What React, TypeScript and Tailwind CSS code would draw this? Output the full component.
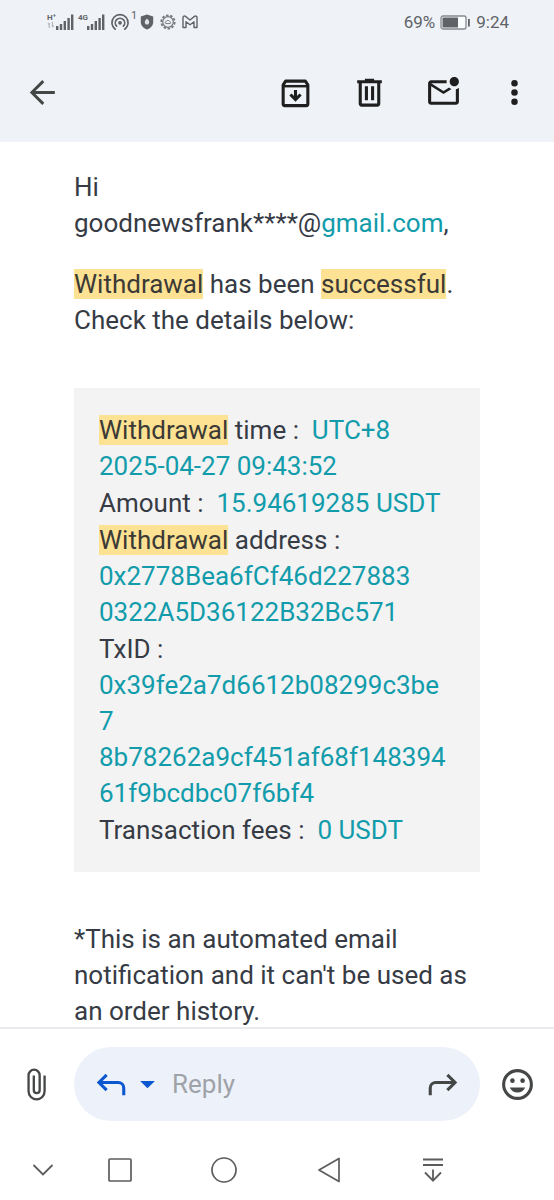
import type { ReactNode } from 'react';

function SignalBars() {
  return (
    <svg width="18" height="16" viewBox="0 0 18 16" fill="#5f6367" aria-hidden="true">
      <rect x="0" y="12" width="2.4" height="4" />
      <rect x="3.8" y="10" width="2.4" height="6" />
      <rect x="7.6" y="7" width="2.4" height="9" />
      <rect x="11.4" y="4" width="2.4" height="12" />
      <rect x="15" y="0.5" width="2.4" height="15.5" />
    </svg>
  );
}

function StatusBar() {
  return (
    <div className="flex h-11 items-center justify-between pl-[47px] pr-[45px] text-[#5f6367]">
      <div className="flex items-center">
        <div className="flex h-4 w-[9px] flex-col">
          <span className="text-[8px] font-bold leading-[8px]">H⁺</span>
          <svg width="8" height="6" viewBox="0 0 8 6" fill="none" stroke="#b4b7ba" strokeWidth="1.2" aria-hidden="true">
            <path d="M2.2 6V1M.8 2.4 2.2 1M5.4 0v5M6.8 3.8 5.4 5" />
          </svg>
        </div>
        <SignalBars />
        <span className="ml-1 h-4 w-[9px] text-[8px] font-bold leading-[8px]">4G</span>
        <SignalBars />
        <svg className="ml-[5px]" width="20" height="18" viewBox="0 0 20 18" fill="none" stroke="#5f6367" strokeWidth="1.7" strokeLinecap="round" aria-hidden="true">
          <path d="M5.2 16.2a8.1 8.1 0 1 1 9.6 0" />
          <path d="M6.6 13.2a4.7 4.7 0 1 1 6.8 0" />
          <circle cx="10" cy="9.8" r="1.9" fill="#5f6367" stroke="none" />
        </svg>
        <span className="h-6 w-[10px] pl-px text-[11px] leading-[12px]">1</span>
        <svg width="14" height="16" viewBox="0 0 14 16" aria-hidden="true">
          <path d="M7 .6 13.2 2.6V8c0 3.6-2.4 6-6.2 7.5C3.2 14 .8 11.6.8 8V2.6Z" fill="#5f6367" />
          <path d="M7 4.6c1.7 1.7 2.2 2.7 2.2 3.8a2.2 2.2 0 0 1-4.4 0C4.8 7.3 5.300 6.300 7 4.600Z" fill="#dfe2e6" />
        </svg>
        <svg className="ml-[6px]" width="16" height="16" viewBox="0 0 16 16" fill="none" stroke="#74787c" strokeWidth="1.2" aria-hidden="true">
          <circle cx="8" cy="8" r="5.3" />
          <circle cx="8" cy="8" r="6.7" strokeWidth="1.8" strokeDasharray="2.5 1.7" />
          <path d="M5.8 9.6h4.4a1.400 1.400 0 0 0-.7-2.300 1.800 1.800 0 0 0-3.200.2 1.100 1.100 0 0 0-.5 2.100Z" strokeWidth="1" />
        </svg>
        <svg className="ml-[6px]" width="16" height="14" viewBox="0 0 16 14" fill="none" stroke="#5f6367" strokeWidth="1.4" strokeLinejoin="round" aria-hidden="true">
          <path d="M1 2.3V12.5H4V6.8L8 9.8L12 6.8V12.5H15V2.3C15 1 13.5.6 12.5 1.4L8 5L3.5 1.4C2.5.6 1 1 1 2.3Z" />
        </svg>
      </div>
      <div className="flex items-center text-[17px] leading-6">
        <span>69%</span>
        <svg className="ml-[5px]" width="31" height="15" viewBox="0 0 31 15" aria-hidden="true">
          <rect x="1" y="1" width="25" height="13" rx="2" fill="#fafbfc" stroke="#85898d" strokeWidth="1.3" />
          <rect x="2.5" y="2.5" width="15.5" height="10" fill="#5f6367" />
          <rect x="28" y="4" width="1.8" height="7.5" fill="#5f6367" />
        </svg>
        <span className="ml-[5px]">9:24</span>
      </div>
    </div>
  );
}

function IconButton({ label, className, children }: { label: string; className: string; children: ReactNode }) {
  return (
    <button type="button" aria-label={label} className={`flex items-center justify-center ${className}`}>
      {children}
    </button>
  );
}

function Toolbar() {
  return (
    <div className="flex h-[98px] items-center pb-[2px] pl-[5px] pr-[6px]">
      <IconButton label="Back" className="h-[74px] w-[74px]">
        <svg width="37" height="37" viewBox="0 0 24 24" fill="none" stroke="#444746" strokeWidth="1.9">
          <path d="M20 12H5M12.5 4.6 5.1 12l7.400 7.400" />
        </svg>
      </IconButton>
      <div className="flex-1" />
      <IconButton label="Archive" className="h-[74px] w-[74px]">
        <svg width="37" height="37" viewBox="0 0 24 24" fill="none" stroke="#1f1f1f" strokeWidth="2">
          <path d="M4 7 5.6 4.6H18.4L20 7V19.5a1 1 0 0 1-1 1H5a1 1 0 0 1-1-1Z" strokeLinejoin="round" />
          <path d="M4 7.9H20" strokeWidth="1.6" />
          <path d="M12 10.3V16.3M8.7 13.3 12 16.6l3.3-3.3" />
        </svg>
      </IconButton>
      <IconButton label="Delete" className="h-[74px] w-[74px]">
        <svg width="37" height="37" viewBox="0 0 24 24" fill="none" stroke="#1f1f1f" strokeWidth="2">
          <path d="M4 5H20M9 4h6" />
          <path d="M6 5V19.2a1 1 0 0 0 1 1H17a1 1 0 0 0 1-1V5" />
          <path d="M10 8v9M14 8v9" />
        </svg>
      </IconButton>
      <IconButton label="Mark as unread" className="h-[74px] w-[74px]">
        <svg width="37" height="37" viewBox="0 0 24 24" fill="#1f1f1f">
          <path d="M22 8.98V18c0 1.1-.9 2-2 2H4c-1.1 0-2-.9-2-2V6c0-1.1.9-2 2-2h10.1c-.06.32-.1.66-.1 1s.04.68.1 1H4l8 5 3.67-2.29c.47.43 1.02.76 1.63.98L12 13 4 8v10h16V9.9c.74-.15 1.42-.48 2-.92zM16 5c0 1.66 1.34 3 3 3s3-1.34 3-3-1.34-3-3-3-3 1.34-3 3z" />
        </svg>
      </IconButton>
      <IconButton label="More options" className="h-[74px] w-[68px]">
        <svg width="37" height="37" viewBox="0 0 24 24" fill="#1f1f1f">
          <circle cx="12" cy="6" r="2.1" />
          <circle cx="12" cy="12" r="2.1" />
          <circle cx="12" cy="18" r="2.1" />
        </svg>
      </IconButton>
    </div>
  );
}

function Mark({ children }: { children: ReactNode }) {
  return <mark className="bg-[#fde293] text-[#3c3a36]">{children}</mark>;
}

function Detail({ label, value }: { label: ReactNode; value: string }) {
  return (
    <p>
      {label}
      {'\u00a0:\u00a0 '}
      <span className="text-[#129cab]">{value}</span>
    </p>
  );
}

function Message() {
  return (
    <main className="min-h-0 flex-1 overflow-y-auto px-[74px] pt-[27px] text-[26px] leading-9 text-[#363b45] [scrollbar-width:none]">
      <p>
        Hi
        <br />
        goodnewsfrank****@
        <a href="http://gmail.com" className="text-[#129cab]">gmail.com</a>,
      </p>
      <p className="mt-[25px]">
        <Mark>Withdrawal</Mark> has been <Mark>successful</Mark>.
        <br />
        Check the details below:
      </p>
      <section className="mt-[50px] flex flex-col gap-px break-words bg-[#f3f3f3] py-6 pl-[25px] pr-7">
        <Detail label={<><Mark>Withdrawal</Mark> time</>} value="UTC+8 2025-04-27 09:43:52" />
        <Detail label="Amount" value="15.94619285 USDT" />
        <Detail label={<><Mark>Withdrawal</Mark> address</>} value="0x2778Bea6fCf46d227883 0322A5D36122B32Bc571" />
        <Detail label="TxID" value="0x39fe2a7d6612b08299c3be7 8b78262a9cf451af68f14839461f9bcdbc07f6bf4" />
        <Detail label="Transaction fees" value="0 USDT" />
      </section>
      <p className="mt-[49px]">*This is an automated email notification and it can't be used as an order history.</p>
    </main>
  );
}

function ReplyBar() {
  return (
    <div className="flex items-center border-t-2 border-[#e9ebee] py-[18px]">
      <IconButton label="Attach file" className="h-[74px] w-[74px]">
        <svg width="37" height="37" viewBox="0 0 24 24" fill="none" stroke="#444746" strokeWidth="1.5">
          <path d="M16.6 6.2V16.4a5.2 5.200 0 0 1-10.400 0V6a3.600 3.600 0 0 1 7.200 0V15.700a1.900 1.900 0 0 1-3.800 0V6.200" />
        </svg>
      </IconButton>
      <div className="flex h-[74px] min-w-0 flex-1 items-center rounded-full bg-[#edf2fa] px-[18px]">
        <IconButton label="Reply" className="h-11 w-[37px]">
          <svg width="37" height="37" viewBox="0 0 24 24" fill="none" stroke="#0b57d0" strokeWidth="2">
            <path d="M9.5 5.7 4.5 10.7l5 5M4.5 10.7H17a3.600 3.600 0 0 1 3.600 3.600V19" />
          </svg>
        </IconButton>
        <IconButton label="Choose reply type" className="h-11 w-[37px]">
          <svg width="37" height="37" viewBox="0 0 24 24" fill="#0b57d0">
            <path d="M7.2 9.700H16.800L12 14.500Z" />
          </svg>
        </IconButton>
        <input
          type="text"
          aria-label="Reply message"
          placeholder="Reply"
          className="ml-[6px] min-w-0 flex-1 bg-transparent text-[26px] leading-9 outline-none placeholder:text-[#9fa3a8]"
        />
        <IconButton label="Forward" className="h-11 w-[37px]">
          <svg width="37" height="37" viewBox="0 0 24 24" fill="none" stroke="#444746" strokeWidth="2">
            <path d="m14.500 5.700 5 5-5 5M19.500 10.700H7a3.600 3.600 0 0 0-3.600 3.600V19" />
          </svg>
        </IconButton>
      </div>
      <IconButton label="Insert emoji" className="h-[74px] w-[74px]">
        <svg width="37" height="37" viewBox="0 0 24 24" fill="#444746">
          <circle cx="12" cy="12" r="9" fill="none" stroke="#444746" strokeWidth="2" />
          <circle cx="8.7" cy="9.5" r="1.5" />
          <circle cx="15.3" cy="9.5" r="1.5" />
          <path d="M7 13.900H17c-.8 2-2.700 3.300-5 3.300s-4.200-1.300-5-3.300Z" />
        </svg>
      </IconButton>
    </div>
  );
}

function NavBar() {
  return (
    <nav className="flex h-[61px] pl-[18px] pr-[70px] text-[#5c5c5c]">
      <IconButton label="Hide navigation" className="w-[50px]">
        <svg width="28" height="28" viewBox="0 0 28 28" fill="none" stroke="currentColor" strokeWidth="1.8" strokeLinecap="round">
          <path d="m5 9.500 9 9 9-9" />
        </svg>
      </IconButton>
      <IconButton label="Recent apps" className="flex-1">
        <svg width="28" height="28" viewBox="0 0 28 28" fill="none" stroke="currentColor" strokeWidth="1.7">
          <rect x="3" y="3" width="22" height="22" rx="1" />
        </svg>
      </IconButton>
      <IconButton label="Home" className="flex-1">
        <svg width="28" height="28" viewBox="0 0 28 28" fill="none" stroke="currentColor" strokeWidth="1.7">
          <circle cx="14" cy="14" r="12" />
        </svg>
      </IconButton>
      <IconButton label="Previous" className="flex-1">
        <svg width="28" height="28" viewBox="0 0 28 28" fill="none" stroke="currentColor" strokeWidth="1.7" strokeLinejoin="round">
          <path d="M25 2.500V25.500L5 14Z" />
        </svg>
      </IconButton>
      <IconButton label="Notifications" className="flex-1">
        <svg width="28" height="28" viewBox="0 0 28 28" fill="none" stroke="currentColor" strokeWidth="1.8">
          <path d="M5 3.500H25M5 9H25M15 13.500V24.500M7 16.500l8 8.200 8-8.200" />
        </svg>
      </IconButton>
    </nav>
  );
}

export default function App() {
  return (
    <div className="flex h-screen flex-col bg-white font-[Roboto,sans-serif]">
      <header className="bg-[#eff3f8]">
        <StatusBar />
        <Toolbar />
      </header>
      <Message />
      <footer>
        <ReplyBar />
        <NavBar />
      </footer>
    </div>
  );
}
